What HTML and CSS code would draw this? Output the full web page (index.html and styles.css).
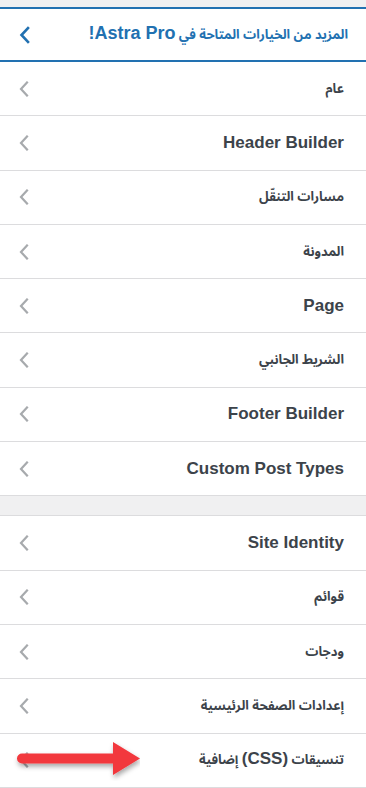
FILE: index.html
```html
<!DOCTYPE html>
<html lang="ar" dir="rtl">
<head>
    <meta charset="UTF-8">
    <meta name="viewport" content="width=device-width, initial-scale=1.0">
    <title>Customizer</title>
    <link rel="stylesheet" href="styles.css">
</head>
<body>

    <div class="top-strip"></div>

    <!-- Panel header -->
    <div class="panel-header">
        <span class="panel-title">المزيد من الخيارات المتاحة في <span class="lat">Astra Pro!</span></span>
        <svg class="chevron chevron-blue" width="12" height="18" viewBox="0 0 12 18">
            <polyline points="9,2 2.5,9 9,16" />
        </svg>
    </div>

    <!-- Sections -->
    <ul class="section-list">
        <li class="section-row"><span>عام</span><svg class="chevron" width="12" height="16" viewBox="0 0 12 16"><polyline points="9,1.5 3,8 9,14.5" /></svg></li>
        <li class="section-row"><span class="lat">Header Builder</span><svg class="chevron" width="12" height="16" viewBox="0 0 12 16"><polyline points="9,1.5 3,8 9,14.5" /></svg></li>
        <li class="section-row"><span>مسارات التنقّل</span><svg class="chevron" width="12" height="16" viewBox="0 0 12 16"><polyline points="9,1.5 3,8 9,14.5" /></svg></li>
        <li class="section-row"><span>المدونة</span><svg class="chevron" width="12" height="16" viewBox="0 0 12 16"><polyline points="9,1.5 3,8 9,14.5" /></svg></li>
        <li class="section-row"><span class="lat">Page</span><svg class="chevron" width="12" height="16" viewBox="0 0 12 16"><polyline points="9,1.5 3,8 9,14.5" /></svg></li>
        <li class="section-row"><span>الشريط الجانبي</span><svg class="chevron" width="12" height="16" viewBox="0 0 12 16"><polyline points="9,1.5 3,8 9,14.5" /></svg></li>
        <li class="section-row"><span class="lat">Footer Builder</span><svg class="chevron" width="12" height="16" viewBox="0 0 12 16"><polyline points="9,1.5 3,8 9,14.5" /></svg></li>
        <li class="section-row"><span class="lat">Custom Post Types</span><svg class="chevron" width="12" height="16" viewBox="0 0 12 16"><polyline points="9,1.5 3,8 9,14.5" /></svg></li>
    </ul>

    <div class="section-gap"></div>

    <ul class="section-list section-list-second">
        <li class="section-row"><span class="lat">Site Identity</span><svg class="chevron" width="12" height="16" viewBox="0 0 12 16"><polyline points="9,1.5 3,8 9,14.5" /></svg></li>
        <li class="section-row"><span>قوائم</span><svg class="chevron" width="12" height="16" viewBox="0 0 12 16"><polyline points="9,1.5 3,8 9,14.5" /></svg></li>
        <li class="section-row"><span>ودجات</span><svg class="chevron" width="12" height="16" viewBox="0 0 12 16"><polyline points="9,1.5 3,8 9,14.5" /></svg></li>
        <li class="section-row"><span>إعدادات الصفحة الرئيسية</span><svg class="chevron" width="12" height="16" viewBox="0 0 12 16"><polyline points="9,1.5 3,8 9,14.5" /></svg></li>
        <li class="section-row"><span>تنسيقات <span class="lat">(CSS)</span> إضافية</span><svg class="chevron" width="12" height="16" viewBox="0 0 12 16"><polyline points="9,1.5 3,8 9,14.5" /></svg></li>
    </ul>

    <!-- Red arrow pointing at the last section -->
    <svg class="pointer-arrow" width="140" height="44" viewBox="0 0 140 44">
        <defs>
            <filter id="arrowShadow" x="-10%" y="-30%" width="120%" height="170%">
                <feDropShadow dx="1" dy="3" stdDeviation="2.5" flood-color="#000" flood-opacity="0.35" />
            </filter>
        </defs>
        <path d="M22,16.5 H113 V5 L140,21.5 L113,38 V26.5 H22 A5,5 0 0 1 22,16.5 Z" fill="#f2383e" filter="url(#arrowShadow)" />
    </svg>

</body>
</html>
```

FILE: styles.css
```css
body {
    margin: 0;
    padding: 0;
    font-family: "Noto Sans Arabic", "Noto Naskh Arabic", "DejaVu Sans", sans-serif;
    background-color: #fff;
    position: relative;
    overflow: hidden;
    height: 788px;
}
.lat {
    font-family: "Liberation Sans", Arial, sans-serif;
}
.top-strip {
    height: 7px;
    background-color: #f0f0f1;
}
.panel-header {
    display: flex;
    justify-content: space-between;
    align-items: center;
    height: 51px;
    padding: 0 18px 0 19px;
    border-top: 2px solid #2271b1;
    border-bottom: 2px solid #2271b1;
}
.panel-title {
    font-size: 13px;
    font-weight: bold;
    color: #2271b1;
    white-space: nowrap;
}
.panel-title .lat {
    font-size: 18px;
}
.section-list {
    list-style: none;
    margin: 0;
    padding: 0;
}
.section-row {
    display: flex;
    justify-content: space-between;
    align-items: center;
    box-sizing: border-box;
    height: 54.3px;
    padding: 0 22px 0 18px;
    border-bottom: 1px solid #dcdcde;
    font-size: 13px;
    font-weight: bold;
    color: #3c434a;
}
.section-row span {
    white-space: nowrap;
}
.section-row .lat {
    font-size: 17px;
}
.section-gap {
    height: 19px;
    background-color: #f0f0f1;
}
.section-list-second {
    border-top: 1px solid #dcdcde;
}
.chevron {
    display: block;
    fill: none;
    stroke: #a7aaad;
    stroke-width: 2.2;
    stroke-linecap: square;
}
.chevron-blue {
    stroke: #2271b1;
    stroke-width: 2.6;
}
/* Annotation arrow */
.pointer-arrow {
    position: absolute;
    left: 0;
    top: 737px;
}
```
